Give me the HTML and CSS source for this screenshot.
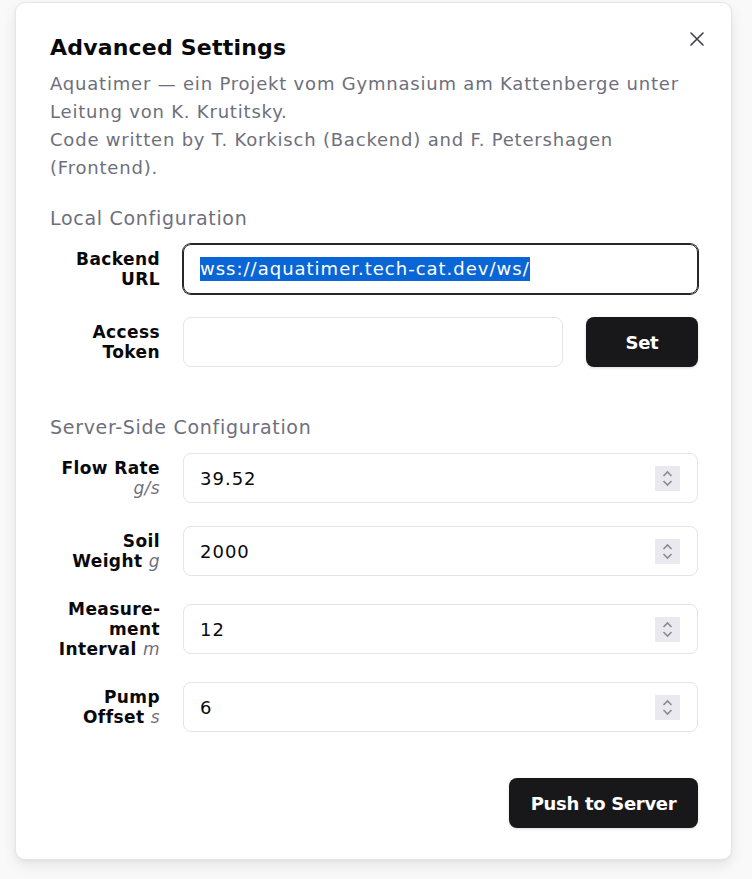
FILE: index.html
```html
<!DOCTYPE html>
<html lang="de">
<head>
<meta charset="utf-8">
<title>Advanced Settings</title>
<link rel="stylesheet" href="styles.css">
</head>
<body>
<div class="backdrop">
  <div class="dialog">
    <button class="close" aria-label="Close">
      <svg width="16" height="16" viewBox="0 0 16 16"><path d="M2 2 L14 14 M14 2 L2 14" stroke="#3f3f46" stroke-width="1.6" stroke-linecap="round"/></svg>
    </button>
    <h1 class="title">Advanced Settings</h1>
    <p class="desc">Aquatimer — ein Projekt vom Gymnasium am Kattenberge unter Leitung von K. Krutitsky.<br>Code written by T. Korkisch (Backend) and F. Petershagen (Frontend).</p>

    <h2 class="section first">Local Configuration</h2>
    <div class="rows">
      <div class="row">
        <label class="label">Backend URL</label>
        <div class="input focus"><span class="sel">wss://aquatimer.tech-cat.dev/ws/</span></div>
      </div>
      <div class="row">
        <label class="label">Access Token</label>
        <div class="input grow"></div>
        <button class="btn set">Set</button>
      </div>
    </div>

    <h2 class="section">Server-Side Configuration</h2>
    <div class="rows">
      <div class="row">
        <label class="label">Flow Rate <i>g/s</i></label>
        <div class="input num"><span>39.52</span><span class="spin"><svg width="25" height="25" viewBox="0 0 25 25"><path d="M8.5 10 L12.5 6 L16.5 10 M8.5 15 L12.5 19 L16.5 15" fill="none" stroke="#8a8a96" stroke-width="1.6"/></svg></span></div>
      </div>
      <div class="row">
        <label class="label">Soil Weight <i>g</i></label>
        <div class="input num"><span>2000</span><span class="spin"><svg width="25" height="25" viewBox="0 0 25 25"><path d="M8.5 10 L12.5 6 L16.5 10 M8.5 15 L12.5 19 L16.5 15" fill="none" stroke="#8a8a96" stroke-width="1.6"/></svg></span></div>
      </div>
      <div class="row">
        <label class="label">Measure&shy;ment Interval <i>m</i></label>
        <div class="input num"><span>12</span><span class="spin"><svg width="25" height="25" viewBox="0 0 25 25"><path d="M8.5 10 L12.5 6 L16.5 10 M8.5 15 L12.5 19 L16.5 15" fill="none" stroke="#8a8a96" stroke-width="1.6"/></svg></span></div>
      </div>
      <div class="row">
        <label class="label">Pump Offset <i>s</i></label>
        <div class="input num"><span>6</span><span class="spin"><svg width="25" height="25" viewBox="0 0 25 25"><path d="M8.5 10 L12.5 6 L16.5 10 M8.5 15 L12.5 19 L16.5 15" fill="none" stroke="#8a8a96" stroke-width="1.6"/></svg></span></div>
      </div>
    </div>

    <div class="footer">
      <button class="btn push">Push to Server</button>
    </div>
  </div>
</div>
</body>
</html>
```
FILE: styles.css
```css
* { box-sizing: border-box; }
html, body { margin: 0; padding: 0; }
body {
  background: #f9f9f9;
  font-family: "DejaVu Sans", Inter, sans-serif;
  color: #09090b;
  width: 752px;
  height: 879px;
  overflow: hidden;
}
.backdrop {
  padding: 2px 20px 0 15px;
}
.dialog {
  position: relative;
  width: 717px;
  height: 858px;
  background: #ffffff;
  border: 1px solid #e6e6e9;
  border-radius: 10px;
  box-shadow: 0 6px 14px rgba(0,0,0,0.08), 0 1px 3px rgba(0,0,0,0.05);
  padding: 29px 33px 0 34px;
}
.close {
  position: absolute;
  top: 27px;
  right: 25px;
  width: 18px;
  height: 18px;
  padding: 1px;
  border: 0;
  background: none;
  display: flex;
  align-items: center;
  justify-content: center;
}
.title {
  margin: 0;
  font-size: 22px;
  line-height: 32px;
  font-weight: 700;
  letter-spacing: 0.2px;
}
.desc {
  margin: 6px 0 0;
  font-size: 18px;
  line-height: 28px;
  letter-spacing: 0.8px;
  color: #6e6f7c;
}
.section {
  margin: 46px 0 12px;
  font-size: 19px;
  line-height: 28px;
  font-weight: 400;
  letter-spacing: 0.7px;
  color: #6e6f7c;
}
.section.first { margin-top: 22px; }
.rows {
  display: flex;
  flex-direction: column;
  gap: 23px;
}
.row {
  display: flex;
  align-items: center;
  gap: 23px;
}
.label {
  width: 110px;
  flex: none;
  text-align: right;
  font-size: 17px;
  line-height: 20px;
  font-weight: 700;
  letter-spacing: 0.4px;
  hyphens: manual;
}
.label i {
  color: #6e6f7c;
  font-weight: 400;
}
.input {
  flex: 1;
  height: 50px;
  border: 1px solid #e4e4e7;
  border-radius: 8px;
  display: flex;
  align-items: center;
  padding: 0 16px;
  font-size: 18px;
  letter-spacing: 1px;
  color: #09090b;
}
.input.focus {
  border-color: #27272a;
  box-shadow: 0 0 0 1px #27272a;
}
.sel {
  background: #0a66d6;
  color: #ffffff;
  line-height: 24px;
}
.input.grow { flex: 1; }
.input.num {
  justify-content: space-between;
  padding-right: 17px;
}
.spin {
  width: 25px;
  height: 25px;
  background: #e9e9ef;
  display: flex;
}
.btn {
  border: 0;
  background: #18181b;
  color: #ffffff;
  border-radius: 8px;
  height: 50px;
  font-family: "DejaVu Sans", Inter, sans-serif;
  font-size: 18px;
  font-weight: 700;
  letter-spacing: -0.3px;
  box-shadow: 0 1px 3px rgba(0,0,0,0.15);
}
.btn.set { width: 112px; flex: none; }
.footer {
  display: flex;
  justify-content: flex-end;
  margin-top: 46px;
}
.btn.push { width: 189px; }
```
